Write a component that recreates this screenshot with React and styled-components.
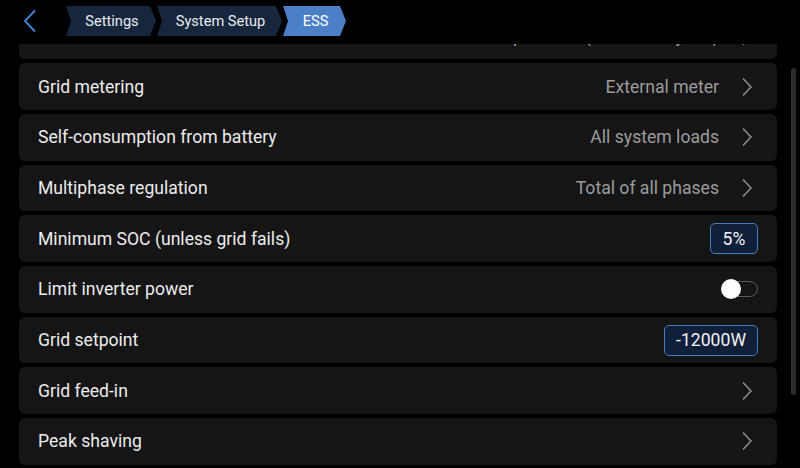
import React from "react";
import styled, { createGlobalStyle } from "styled-components";

const Global = createGlobalStyle`
  html, body { margin: 0; padding: 0; background: #000; }
  body { font-family: Roboto, "Noto Sans", "Liberation Sans", sans-serif; }
  #root { width: 800px; height: 468px; overflow: hidden; }
`;

const Screen = styled.div`
  width: 800px;
  height: 468px;
  background: #000;
  display: flex;
  flex-direction: column;
  position: relative;
  overflow: hidden;
`;

const Header = styled.div`
  height: 44px;
  flex: 0 0 44px;
  display: flex;
  align-items: flex-start;
  padding-top: 6px;
  box-sizing: border-box;
`;

const BackButton = styled.div`
  width: 66px;
  height: 30px;
  display: flex;
  align-items: center;
  padding-left: 23px;
  box-sizing: border-box;
`;

const Crumbs = styled.div`
  display: flex;
  gap: 1px;
`;

const Crumb = styled.div`
  height: 30px;
  width: ${(p) => p.$w}px;
  box-sizing: border-box;
  display: flex;
  align-items: center;
  justify-content: center;
  padding-left: 2px;
  font-size: 14.6px;
  color: ${(p) => (p.$active ? "#ffffff" : "#e8ecf2")};
  background: ${(p) => (p.$active ? "#4c80c6" : "#16263c")};
  clip-path: polygon(0 0, calc(100% - 6px) 0, 100% 50%, calc(100% - 6px) 100%, 0 100%, 5px 50%);
`;

const Viewport = styled.div`
  flex: 1;
  overflow: hidden;
  position: relative;
`;

const List = styled.div`
  display: flex;
  flex-direction: column;
  gap: 4px;
  margin-top: -31.4px;
  padding: 0 23px 0 19px;
`;

const Row = styled.div`
  height: 46.7px;
  flex: 0 0 46.7px;
  background: #151515;
  border-radius: 6px;
  display: flex;
  align-items: center;
  padding: 0 19px;
  box-sizing: border-box;
`;

const Label = styled.div`
  flex: 1;
  font-size: 17.6px;
  color: #ececec;
  white-space: nowrap;
`;

const Value = styled.div`
  font-size: 17.6px;
  color: #9c9c9c;
  white-space: nowrap;
`;

const ChevronBox = styled.div`
  width: 22px;
  margin-left: 17px;
  display: flex;
  justify-content: center;
  align-items: center;
`;

const InputBox = styled.div`
  height: 31px;
  min-width: 48px;
  box-sizing: border-box;
  padding: 0 11px;
  border: 1.5px solid #4a7cc0;
  border-radius: 5px;
  background: #11203a;
  color: #f2f2f2;
  font-size: 17.6px;
  display: flex;
  align-items: center;
  justify-content: center;
`;

const Toggle = styled.div`
  width: 36px;
  height: 16px;
  box-sizing: border-box;
  border: 1.5px solid #5c5c5c;
  border-radius: 8px;
  position: relative;
`;

const Knob = styled.div`
  position: absolute;
  width: 20px;
  height: 20px;
  border-radius: 50%;
  background: #fff;
  left: -2px;
  top: -3.5px;
`;

const Scrollbar = styled.div`
  position: absolute;
  right: 4px;
  top: 24px;
  width: 5px;
  height: 327px;
  border-radius: 3px;
  background: #2d2d2b;
`;

const Chevron = () => (
  <svg width="12" height="20" viewBox="0 0 12 20">
    <path d="M2 1.5 L10 10 L2 18.5" fill="none" stroke="#8a8a8a" strokeWidth="1.6" />
  </svg>
);

const BackIcon = () => (
  <svg width="14" height="24" viewBox="0 0 14 24">
    <path d="M12 1.5 L2 12 L12 22.5" fill="none" stroke="#3f7fd0" strokeWidth="2" />
  </svg>
);

const rows = [
  { label: "ESS mode", value: "Optimized (with BatteryLife)", chevron: true },
  { label: "Grid metering", value: "External meter", chevron: true },
  { label: "Self-consumption from battery", value: "All system loads", chevron: true },
  { label: "Multiphase regulation", value: "Total of all phases", chevron: true },
  { label: "Minimum SOC (unless grid fails)", input: "5%" },
  { label: "Limit inverter power", toggle: true },
  { label: "Grid setpoint", input: "-12000W" },
  { label: "Grid feed-in", chevron: true },
  { label: "Peak shaving", chevron: true },
];

export default function App() {
  return (
    <Screen>
      <Global />
      <Header>
        <BackButton>
          <BackIcon />
        </BackButton>
        <Crumbs>
          <Crumb $w={90}>Settings</Crumb>
          <Crumb $w={125}>System Setup</Crumb>
          <Crumb $w={63} $active>ESS</Crumb>
        </Crumbs>
      </Header>
      <Viewport>
        <List>
          {rows.map((r) => (
            <Row key={r.label}>
              <Label>{r.label}</Label>
              {r.value && <Value>{r.value}</Value>}
              {r.chevron && (
                <ChevronBox>
                  <Chevron />
                </ChevronBox>
              )}
              {r.input && <InputBox>{r.input}</InputBox>}
              {r.toggle && (
                <Toggle>
                  <Knob />
                </Toggle>
              )}
            </Row>
          ))}
        </List>
        <Scrollbar />
      </Viewport>
    </Screen>
  );
}
